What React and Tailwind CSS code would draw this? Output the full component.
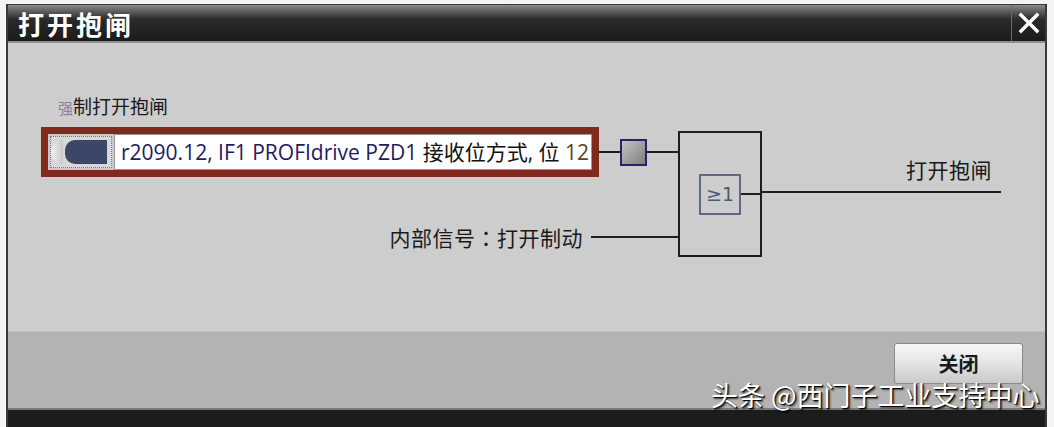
import React from 'react';

const cjk = '"Noto Sans CJK SC", "Noto Sans", sans-serif';
const latin = '"Open Sans", "Noto Sans CJK SC", sans-serif';

function InputField() {
  return (
    <div className="flex h-[50px] w-[558px] items-center bg-[#82291e] p-[7px]">
      <div className="flex h-full w-full items-stretch bg-[#c9c9c9]">
        {/* drop button */}
        <div className="m-[2px] flex w-[62px] items-center border border-dotted border-[#7a7a7a] bg-[#d8d8d8]">
          <div className="h-[24px] w-[12px] rounded-l-full bg-gradient-to-r from-[#f2f2f2] to-[#c8c8c8]" />
          <div className="ml-[2px] h-[24px] w-[42px] rounded-l-[10px] bg-[#3c4667]" />
        </div>
        <div
          className="flex flex-1 items-center overflow-hidden whitespace-nowrap border border-[#9a9a9a] bg-white pl-[6px] text-[21px] leading-none"
          style={{ fontFamily: latin }}
        >
          <span className="text-[#1f1b5e]">r2090.12, IF1 PROFIdrive PZD1&nbsp;</span>
          <span className="text-[#111]">接收位方式, 位&nbsp;</span>
          <span className="text-[#5a4420]">12</span>
        </div>
      </div>
    </div>
  );
}

export default function App() {
  return (
    <div className="relative h-[427px] w-[1054px] overflow-hidden bg-[#f4f4f4]" style={{ fontFamily: cjk }}>
      <div className="ml-[6px] mt-[4px] flex h-[423px] w-[1041px] flex-col border-x-2 border-t border-[#3a3a3a]">
        {/* title bar */}
        <div className="flex h-[36px] items-stretch bg-gradient-to-b from-[#8a8a8a] via-[#2a2a2a] via-40% to-[#1b1b1b]">
          <div className="flex flex-1 items-center pl-[10px] text-[26px] font-bold tracking-[3px] text-white">
            打开抱闸
          </div>
          <div className="flex w-[34px] items-center justify-center border-l border-[#6a6a6a]">
            <svg width="22" height="22" viewBox="0 0 22 22">
              <path d="M3 3 L19 19 M19 3 L3 19" stroke="#fff" strokeWidth="3.4" strokeLinecap="square" />
            </svg>
          </div>
        </div>

        {/* body */}
        <div className="h-[290px] border-t-2 border-[#8f8f8f] bg-[#cdcdcd] pl-[33px] pt-[50px]">
          <div className="ml-[17px] text-[19px] leading-[26px] text-[#1a1a1a]">
            <span className="text-[15px] text-[#8a7fa0]">强</span>制打开抱闸
          </div>
          <div className="mt-[6px] flex items-start">
            {/* inputs column */}
            <div className="flex w-[637px] flex-col">
              <div className="flex items-center">
                <InputField />
                <div className="h-[2px] w-[21px] bg-[#1e1e1e]" />
                <div className="h-[27px] w-[27px] border-2 border-[#25236e] bg-gradient-to-br from-[#c4c4c4] to-[#7e7e7e] p-[2px]">
                  <div className="h-full w-full bg-gradient-to-br from-[#bdbdbd] to-[#858585]" />
                </div>
                <div className="h-[2px] w-[31px] bg-[#1e1e1e]" />
              </div>
              <div className="mt-[47px] flex items-center justify-end">
                <span className="text-[21px] leading-[26px] tracking-[0.5px] text-[#1a1a1a]">
                  内部信号
                  <span style={{ fontFamily: '"Noto Sans CJK TC", sans-serif' }}>：</span>
                  打开制动
                </span>
                <div className="ml-[8px] h-[2px] w-[87px] bg-[#1e1e1e]" />
              </div>
            </div>
            {/* OR gate */}
            <div className="mt-[4px] flex h-[126px] w-[84px] items-center border-2 border-[#1e1e1e] pl-[19px]">
              <div
                className="flex h-[41px] w-[42px] items-center justify-center border-2 border-[#5d6886] text-[19px] text-[#4f5a78]"
                style={{ fontFamily: '"DejaVu Sans", sans-serif' }}
              >
                ≥1
              </div>
              <div className="h-[2px] flex-1 bg-[#1e1e1e]" />
            </div>
            {/* output */}
            <div className="mt-[29px] flex w-[239px] flex-col items-end">
              <div className="mr-[9px] text-[21px] leading-[26px] tracking-[0.5px] text-[#1a1a1a]">打开抱闸</div>
              <div className="mt-[9px] h-[2px] w-full bg-[#1e1e1e]" />
            </div>
          </div>
        </div>

        {/* footer */}
        <div className="flex h-[77px] justify-end border-t border-[#c2c2c2] bg-[#b3b3b3] pr-[22px] pt-[11px]">
          <div className="flex h-[41px] w-[129px] items-center justify-center rounded-[3px] border border-[#8a8a8a] bg-gradient-to-b from-[#f7f7f7] via-[#e4e4e4] to-[#c9c9c9] text-[20px] font-bold text-[#1a1a1a]">
            关闭
          </div>
        </div>
        <div className="flex-1 border-t-2 border-[#7a7a7a] bg-[#1c1c1c]" />
      </div>

      {/* watermark */}
      <div
        className="absolute left-[711px] top-[377px] whitespace-nowrap text-[27px] leading-[36px] text-white"
        style={{ textShadow: '1px 1px 1px #000, 2px 2px 2px rgba(0,0,0,0.6)' }}
      >
        头条 @西门子工业支持中心
      </div>
    </div>
  );
}
